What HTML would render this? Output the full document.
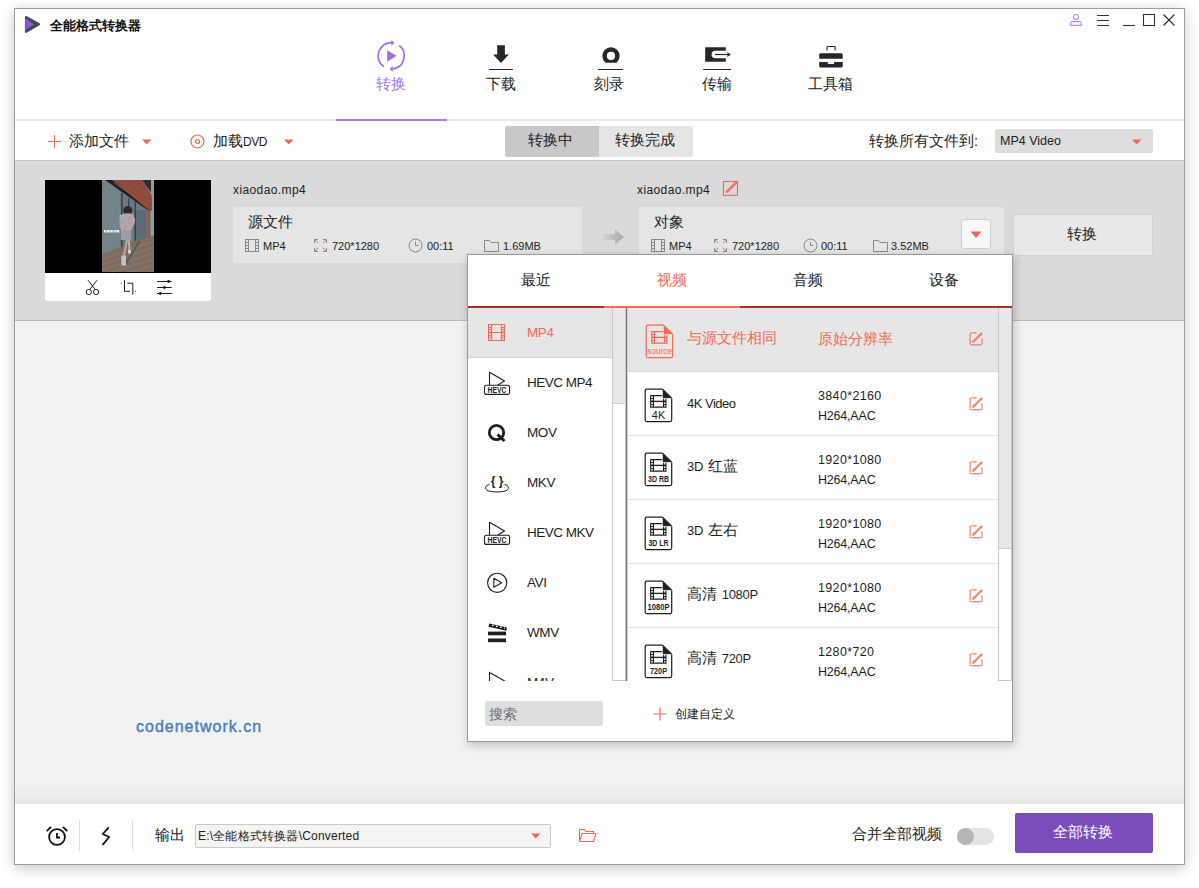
<!DOCTYPE html>
<html><head><meta charset="utf-8">
<style>
*{margin:0;padding:0;box-sizing:border-box;}
html,body{width:1199px;height:888px;overflow:hidden;background:#fff;font-family:"Liberation Sans",sans-serif;color:#222;}
.a{position:absolute;}
.t{position:absolute;white-space:nowrap;line-height:1;}
svg{position:absolute;overflow:visible;}
#win{position:absolute;left:14px;top:8px;width:1171px;height:857px;border:1px solid #9c9c9c;background:#fff;box-shadow:0 3px 13px rgba(0,0,0,0.22);overflow:hidden;}
</style></head><body>
<div id="win"></div>
<div class="a" id="root" style="left:0;top:0;width:1199px;height:888px;">

<!-- ===== TITLE BAR ===== -->
<svg style="left:24px;top:15px" width="17" height="19" viewBox="0 0 17 19">
  <path d="M2 2 L15 9.3 L2 16.8 Z" fill="#4a4a4a" stroke="#4a4a4a" stroke-width="2.2" stroke-linejoin="round"/>
  <path d="M1.2 3.2 L10 9.3 L1.2 15.2 Z" fill="#8b56d9"/>
</svg>
<div class="t" style="left:50px;top:19px;font-size:13px;font-weight:bold;color:#111;">全能格式转换器</div>

<!-- window controls -->
<svg style="left:1069px;top:13px" width="14" height="14" viewBox="0 0 14 14">
  <circle cx="6.9" cy="4" r="2.5" fill="none" stroke="#a46cf0" stroke-width="1"/>
  <path d="M1.5 12.3 V10.6 Q1.5 8.6 3.5 8.6 H10.4 Q12.4 8.6 12.4 10.6 V12.3 Z" fill="none" stroke="#a46cf0" stroke-width="1"/>
</svg>
<svg style="left:1097px;top:14px" width="13" height="13" viewBox="0 0 13 13">
  <path d="M0 1.5H12M0 6.5H12M0 11.5H12" stroke="#333" stroke-width="1.1"/>
</svg>
<svg style="left:1122px;top:14px" width="13" height="13" viewBox="0 0 13 13">
  <path d="M1 11.5H13" stroke="#333" stroke-width="1.1"/>
</svg>
<svg style="left:1143px;top:14px" width="13" height="13" viewBox="0 0 13 13">
  <rect x="0.5" y="0.5" width="11" height="11" fill="none" stroke="#333" stroke-width="1.1"/>
</svg>
<svg style="left:1163px;top:14px" width="13" height="13" viewBox="0 0 13 13">
  <path d="M0.5 0.5L11.5 11.5M11.5 0.5L0.5 11.5" stroke="#333" stroke-width="1.2"/>
</svg>

<!-- ===== NAV ===== -->
<svg style="left:376px;top:41px" width="30" height="32" viewBox="0 0 30 32">
  <path d="M15.8 1.7 A13.2 13.2 0 0 0 7.7 25.7" fill="none" stroke="#a06aee" stroke-width="1.7"/>
  <path d="M23.2 4.4 A13.2 13.2 0 0 1 16.4 27.9" fill="none" stroke="#a06aee" stroke-width="1.7"/>
  <path d="M15.3 -1.1 L18.3 1.8 L15.3 4.8 Z" fill="#a06aee"/>
  <path d="M16.7 25 L13.7 28 L16.7 31 Z" fill="#a06aee"/>
  <path d="M11.2 9.2 L20.5 14.8 L11.2 20.7 Z" fill="#a06aee"/>
</svg>
<div class="t" style="left:376px;top:77px;font-size:14.5px;color:#a873ee;">转换</div>

<svg style="left:488px;top:44px" width="26" height="28" viewBox="0 0 26 28">
  <path d="M9.2 1.2 H16.9 V10.4 H20.9 L13 19 L5 10.4 H9.2 Z" fill="#2a2627"/>
  <path d="M1 25.5 H24.9" stroke="#2a2627" stroke-width="1"/>
</svg>
<div class="t" style="left:486px;top:77px;font-size:14.5px;color:#222;">下载</div>

<svg style="left:597px;top:46px" width="28" height="26" viewBox="0 0 28 26">
  <path d="M8.57 16.7 A8.7 8.7 0 1 1 19.43 16.7 Z" fill="#2a2627"/>
  <circle cx="14" cy="9.9" r="4.1" fill="#fff"/>
  <path d="M1 23.5 H25.9" stroke="#2a2627" stroke-width="1"/>
</svg>
<div class="t" style="left:594px;top:77px;font-size:14.5px;color:#222;">刻录</div>

<svg style="left:702px;top:46px" width="30" height="26" viewBox="0 0 30 26">
  <path d="M3.2 1.2 H23.8 V4.7 H13.35 A3.75 3.75 0 0 0 13.35 12.2 H23.8 V15.8 H3.2 Z" fill="#2a2627"/>
  <path d="M13 8.5 H26" stroke="#2a2627" stroke-width="1.2"/>
  <path d="M25.3 6.2 L29 8.5 L25.3 10.9 Z" fill="#2a2627"/>
  <path d="M1.2 23.5 H29" stroke="#2a2627" stroke-width="1"/>
</svg>
<div class="t" style="left:702px;top:77px;font-size:14.5px;color:#222;">传输</div>

<svg style="left:818px;top:45px" width="26" height="24" viewBox="0 0 26 24">
  <path d="M9 5.5 V2.2 Q9 1.5 9.7 1.5 H16.4 Q17.1 1.5 17.1 2.2 V5.5" fill="none" stroke="#2a2627" stroke-width="1.1"/>
  <path d="M1.2 9.7 Q1.2 8.2 2.7 8.2 H23.2 Q24.7 8.2 24.7 9.7 V13.8 H1.2 Z" fill="#2a2627"/>
  <path d="M1.2 17 H9.8 V19.1 H16.1 V17 H24.7 V21.1 Q24.7 22.6 23.2 22.6 H2.7 Q1.2 22.6 1.2 21.1 Z" fill="#2a2627"/>
</svg>
<div class="t" style="left:808px;top:77px;font-size:14.5px;color:#222;">工具箱</div>

<div class="a" style="left:15px;top:119px;width:1169px;height:2px;background:#eee8f6;"></div>
<div class="a" style="left:336px;top:119px;width:111px;height:2px;background:#b07cf7;"></div>

<!-- ===== TOOLBAR ===== -->
<svg style="left:47px;top:134px" width="15" height="15" viewBox="0 0 15 15"><path d="M7.5 1V14M1 7.5H14" stroke="#f26a4f" stroke-width="1"/></svg>
<div class="t" style="left:69px;top:134px;font-size:14.5px;color:#222;">添加文件</div>
<svg style="left:142px;top:139px" width="10" height="6" viewBox="0 0 10 6"><path d="M0 0.5H9.5L4.75 5.5Z" fill="#f0694f"/></svg>

<svg style="left:190px;top:134px" width="16" height="16" viewBox="0 0 16 16">
  <circle cx="7.5" cy="7.5" r="6.5" fill="none" stroke="#f0694f" stroke-width="1.2"/>
  <circle cx="7.5" cy="7.5" r="2" fill="none" stroke="#f0694f" stroke-width="1.2"/>
</svg>
<div class="t" style="left:213px;top:134px;font-size:14.5px;color:#222;">加载<span style="font-size:12px;letter-spacing:-0.4px;">DVD</span></div>
<svg style="left:284px;top:139px" width="10" height="6" viewBox="0 0 10 6"><path d="M0 0.5H9.5L4.75 5.5Z" fill="#f0694f"/></svg>

<div class="a" style="left:505px;top:126px;width:188px;height:31px;background:#e5e5e5;border-radius:2px;"></div>
<div class="a" style="left:505px;top:126px;width:94px;height:31px;background:#c8c8c8;border-radius:2px 0 0 2px;"></div>
<div class="t" style="left:528px;top:133px;font-size:14.5px;color:#222;">转换中</div>
<div class="t" style="left:615px;top:133px;font-size:14.5px;color:#222;">转换完成</div>

<div class="t" style="left:869px;top:134px;font-size:14.5px;color:#222;">转换所有文件到:</div>
<div class="a" style="left:995px;top:129px;width:158px;height:24px;background:#dddddd;border-radius:2px;"></div>
<div class="t" style="left:1000px;top:135px;font-size:12.5px;color:#222;">MP4 Video</div>
<svg style="left:1132px;top:139px" width="10" height="6" viewBox="0 0 10 6"><path d="M0 0.5H9.5L4.75 5.5Z" fill="#f0694f"/></svg>

<!-- ===== FILE ITEM AREA ===== -->
<div class="a" style="left:15px;top:160px;width:1169px;height:161px;background:#dadada;border-top:1px solid #c6c6c6;border-bottom:1px solid #bababa;"></div>
<div class="a" style="left:15px;top:321px;width:1169px;height:483px;background:#f2f2f0;"></div>
<div class="a" style="left:15px;top:782px;width:1169px;height:22px;background:linear-gradient(#f2f2f0,#ebebe9 70%,#e8e7e5);"></div>


<!-- thumbnail -->
<div class="a" style="left:45px;top:180px;width:166px;height:121px;background:#fff;border-radius:0 0 2px 2px;"></div>
<div class="a" style="left:45px;top:180px;width:166px;height:93px;background:#000;"></div>
<svg style="left:102px;top:180px" width="52" height="92" viewBox="0 0 52 92">
  <rect x="0" y="0" width="52" height="92" fill="#6a7a80"/>
  <path d="M1 0V74M3 0V74M5 0V73M7 0V73M9 0V72M11 0V71M13 0V71M15 0V70M17 0V69" stroke="#7f9095" stroke-width="0.9"/>
  <polygon points="33,30 52,30 52,56 33,61" fill="#586c75"/>
  <polygon points="48.5,0 52,0 52,92 48.5,92" fill="#8e9ea6"/>
  <polygon points="40,0 49,0 49,12" fill="#2c2e30"/>
  <polygon points="3,0 10.4,0 44,26 49,31 44,29" fill="#1e2022"/>
  <polygon points="10.4,0 40.2,0 49.9,15.8 49.9,31 44,28" fill="#8d4b3b"/>
  <path d="M12 3L46 26M18 2L48 22M26 1L49 18" stroke="#9a5848" stroke-width="0.8"/>
  <rect x="19.2" y="13" width="1.3" height="58" fill="#2f3538"/>
  <rect x="26.2" y="18" width="1.1" height="45" fill="#34393c"/>
  <rect x="32.6" y="22" width="1.2" height="40" fill="#2f3538"/>
  <rect x="44.5" y="30" width="2.2" height="28" fill="#a35c48"/>
  <polygon points="0,74.5 33,61 52,55 52,92 0,92" fill="#7f6c61"/>
  <path d="M0 80L52 61M0 85L52 67M0 90L52 73M10 92L52 79M28 92L52 85" stroke="#8f7c70" stroke-width="0.9"/>
  <path d="M23.5 84 L37.5 61" stroke="#4e5560" stroke-width="1.6"/>
  <ellipse cx="25.8" cy="30.5" rx="4.5" ry="4.6" fill="#2f2a2a"/>
  <path d="M17.5 35 Q24 32 31 34 L33 40 Q31 47 29 51 L19 51 Q17 44 17.5 35Z" fill="#aea7a6"/>
  <circle cx="20" cy="43" r="0.9" fill="#d97c64"/><circle cx="27" cy="38" r="0.8" fill="#d97c64"/><circle cx="24" cy="47" r="0.8" fill="#d97c64"/>
  <path d="M30 37 Q34 40 31 45" stroke="#d3a090" stroke-width="1.6" fill="none"/>
  <rect x="18.8" y="50.5" width="10.5" height="9.5" fill="#9b9ea2"/>
  <path d="M25 60 L21.8 76" stroke="#bfa99f" stroke-width="2"/>
  <path d="M27 60 L27.5 71" stroke="#cfb4a8" stroke-width="1.8"/>
  <rect x="19.4" y="75.5" width="4.5" height="10" fill="#c3c7c9"/>
  <rect x="26" y="70" width="3" height="3.5" fill="#d0d3d5"/>
  <path d="M2 51.2H17.5" stroke="#f2f2f2" stroke-width="2.4" stroke-dasharray="2 0.7 3 0.6 2.5 0.8"/>
</svg>
<svg style="left:85px;top:279px" width="16" height="16" viewBox="0 0 16 16">
  <path d="M3 1.2 L10.3 10.6 M12 1.2 L4.7 10.6" stroke="#1e1e1e" stroke-width="1"/>
  <circle cx="3.8" cy="13" r="2.6" fill="#fff" stroke="#1e1e1e" stroke-width="1"/>
  <circle cx="11.1" cy="13" r="2.6" fill="#fff" stroke="#1e1e1e" stroke-width="1"/>
</svg>
<svg style="left:120px;top:279px" width="17" height="17" viewBox="0 0 17 17">
  <path d="M4.5 1.4V12.4H10M7.3 4.2H12.8V15.6" fill="none" stroke="#1e1e1e" stroke-width="1"/>
  <circle cx="1.3" cy="4.2" r="0.55" fill="#1e1e1e"/><circle cx="15.6" cy="12.2" r="0.55" fill="#1e1e1e"/>
</svg>
<svg style="left:156px;top:279px" width="18" height="17" viewBox="0 0 18 17">
  <path d="M1.1 2.5H15.8M1.1 8.5H15.8M1.1 14.5H15.8" stroke="#1e1e1e" stroke-width="1"/>
  <circle cx="12.6" cy="2.5" r="1.4" fill="#1e1e1e"/><circle cx="8.4" cy="8.5" r="1.4" fill="#1e1e1e"/><circle cx="4.3" cy="14.5" r="1.4" fill="#1e1e1e"/>
</svg>

<!-- source -->
<div class="t" style="left:233px;top:184px;font-size:12px;letter-spacing:0.4px;color:#222;">xiaodao.mp4</div>
<div class="a" style="left:233px;top:207px;width:349px;height:56px;background:#e5e5e5;border-radius:2px;"></div>
<div class="t" style="left:248px;top:215px;font-size:14.5px;color:#222;">源文件</div>
<div class="a" id="srcmeta" style="left:0;top:0;">
<svg style="left:245px;top:239px" width="14" height="13" viewBox="0 0 14 13"><rect x="0.5" y="0.5" width="13" height="12" fill="none" stroke="#8a8a8a"/><path d="M3.5 0.5V12.5M10.5 0.5V12.5M0.5 3.5H3.5M0.5 6.5H3.5M0.5 9.5H3.5M10.5 3.5H13.5M10.5 6.5H13.5M10.5 9.5H13.5" stroke="#8a8a8a"/></svg>
<div class="t" style="left:263px;top:241px;font-size:11px;color:#222;">MP4</div>
<svg style="left:314px;top:239px" width="13" height="13" viewBox="0 0 13 13"><path d="M0.5 4V0.5H4M9 0.5H12.5V4M12.5 9V12.5H9M4 12.5H0.5V9M1 1L4 4M12 1L9 4M12 12L9 9M1 12L4 9" fill="none" stroke="#8a8a8a"/></svg>
<div class="t" style="left:332px;top:241px;font-size:11px;color:#222;">720*1280</div>
<svg style="left:408px;top:238px" width="15" height="15" viewBox="0 0 15 15"><circle cx="7.5" cy="7.5" r="6.5" fill="none" stroke="#8a8a8a"/><path d="M7.5 3.5V7.5H10.5" fill="none" stroke="#8a8a8a"/></svg>
<div class="t" style="left:427px;top:241px;font-size:11px;color:#222;">00:11</div>
<svg style="left:484px;top:239px" width="15" height="13" viewBox="0 0 15 13"><path d="M0.5 1.5H5.5L7 3.5H14.5V12.5H0.5Z" fill="none" stroke="#8a8a8a"/></svg>
<div class="t" style="left:503px;top:241px;font-size:11px;color:#222;">1.69MB</div>
</div>

<!-- arrow -->
<svg style="left:598px;top:228px" width="28" height="18" viewBox="0 0 28 18">
  <defs><linearGradient id="ag" x1="0" x2="1"><stop offset="0" stop-color="#dadada"/><stop offset="1" stop-color="#a8a8a8"/></linearGradient></defs>
  <path d="M2 6H17V1.5L26 9L17 16.5V12H2Z" fill="url(#ag)"/>
</svg>

<!-- target -->
<div class="t" style="left:637px;top:184px;font-size:12px;letter-spacing:0.4px;color:#222;">xiaodao.mp4</div>
<svg style="left:722px;top:180px" width="17" height="17" viewBox="0 0 17 17">
  <rect x="1.5" y="1.5" width="14" height="13.8" fill="none" stroke="#f26a4f" stroke-width="1.1"/>
  <path d="M5.2 11.6 L14.6 2.2" stroke="#f26a4f" stroke-width="2.6" stroke-linecap="round"/>
  <path d="M5.8 11 L13.8 3" stroke="#fbd3c8" stroke-width="0.6" stroke-dasharray="0.8 0.9"/>
</svg>
<div class="a" style="left:639px;top:207px;width:365px;height:56px;background:#e5e5e5;border-radius:2px;"></div>
<div class="t" style="left:654px;top:215px;font-size:14.5px;color:#222;">对象</div>
<svg style="left:651px;top:239px" width="14" height="13" viewBox="0 0 14 13"><rect x="0.5" y="0.5" width="13" height="12" fill="none" stroke="#8a8a8a"/><path d="M3.5 0.5V12.5M10.5 0.5V12.5M0.5 3.5H3.5M0.5 6.5H3.5M0.5 9.5H3.5M10.5 3.5H13.5M10.5 6.5H13.5M10.5 9.5H13.5" stroke="#8a8a8a"/></svg>
<div class="t" style="left:669px;top:241px;font-size:11px;color:#222;">MP4</div>
<svg style="left:714px;top:239px" width="13" height="13" viewBox="0 0 13 13"><path d="M0.5 4V0.5H4M9 0.5H12.5V4M12.5 9V12.5H9M4 12.5H0.5V9M1 1L4 4M12 1L9 4M12 12L9 9M1 12L4 9" fill="none" stroke="#8a8a8a"/></svg>
<div class="t" style="left:732px;top:241px;font-size:11px;color:#222;">720*1280</div>
<svg style="left:803px;top:238px" width="15" height="15" viewBox="0 0 15 15"><circle cx="7.5" cy="7.5" r="6.5" fill="none" stroke="#8a8a8a"/><path d="M7.5 3.5V7.5H10.5" fill="none" stroke="#8a8a8a"/></svg>
<div class="t" style="left:821px;top:241px;font-size:11px;color:#222;">00:11</div>
<svg style="left:873px;top:239px" width="15" height="13" viewBox="0 0 15 13"><path d="M0.5 1.5H5.5L7 3.5H14.5V12.5H0.5Z" fill="none" stroke="#8a8a8a"/></svg>
<div class="t" style="left:891px;top:241px;font-size:11px;color:#222;">3.52MB</div>
<div class="a" style="left:961px;top:219px;width:30px;height:30px;background:#f7f7f7;border:1px solid #cfcfcf;border-radius:3px;"></div>
<svg style="left:970px;top:231px" width="12" height="8" viewBox="0 0 12 8"><path d="M0.5 0.5H11.5L6 7Z" fill="#f0694f"/></svg>
<div class="a" style="left:1013px;top:214px;width:140px;height:42px;background:#e8e8e8;border:1px solid #d2d2d2;border-radius:2px;"></div>
<div class="t" style="left:1067px;top:227px;font-size:14.5px;color:#222;">转换</div>

<!-- watermark -->
<div class="t" style="left:136px;top:719px;font-size:16px;color:#4a80c2;letter-spacing:1px;-webkit-text-stroke:0.45px #4a80c2;">codenetwork.cn</div>


<!-- ===== FORMAT PANEL ===== -->
<div class="a" style="left:467px;top:254px;width:546px;height:488px;background:#fff;border:1px solid #9a9a9a;box-shadow:1px 3px 9px rgba(0,0,0,0.22);"></div>
<div class="t" style="left:521px;top:273px;font-size:14.5px;color:#222;">最近</div>
<div class="t" style="left:657px;top:273px;font-size:14.5px;color:#f26a4f;">视频</div>
<div class="t" style="left:793px;top:273px;font-size:14.5px;color:#222;">音频</div>
<div class="t" style="left:929px;top:273px;font-size:14.5px;color:#222;">设备</div>
<div class="a" style="left:468px;top:306px;width:544px;height:2px;background:#a83220;"></div>
<div class="a" style="left:604px;top:306px;width:136px;height:2px;background:#f56a4c;"></div>

<!-- left list -->
<div class="a" style="left:468px;top:308px;width:159px;height:373px;overflow:hidden;">
  <div class="a" style="left:0;top:0;width:144px;height:50px;background:#e6e6e6;border-bottom:1px solid #d0d0d0;"></div>
  <div class="a" style="left:144px;top:0;width:14px;height:373px;background:#fff;border:1px solid #c8c8c8;border-top:none;"></div>
  <div class="a" style="left:144px;top:0;width:14px;height:96px;background:#e8e8e8;border:1px solid #c8c8c8;border-top:none;border-bottom-color:#cdcdcd;"></div>
  <div class="a" style="left:158px;top:0;width:1px;height:373px;background:#787878;"></div>
</div>
<svg style="left:487px;top:323px" width="19" height="19" viewBox="0 0 19 19"><path fill-rule="evenodd" d="M1 1H18V18H1Z M5.2 2.1H13.8V9H5.2Z M5.2 10H13.8V16.9H5.2Z M2.1 2.0H4.1V3.9H2.1Z M14.9 2.0H16.9V3.9H14.9Z M2.1 5.0H4.1V6.0H2.1Z M14.9 5.0H16.9V6.0H14.9Z M2.1 7.0H4.1V8.6H2.1Z M14.9 7.0H16.9V8.6H14.9Z M2.1 10.2H4.1V11.8H2.1Z M14.9 10.2H16.9V11.8H14.9Z M2.1 12.8H4.1V13.8H2.1Z M14.9 12.8H16.9V13.8H14.9Z M2.1 14.8H4.1V16.8H2.1Z M14.9 14.8H16.9V16.8H14.9Z " fill="#f26a4f"/></svg>
<div class="t" style="left:527px;top:326px;font-size:13.5px;letter-spacing:-0.4px;color:#f26a4f;">MP4</div>
<svg style="left:483px;top:370px" width="28" height="26" viewBox="0 0 28 26"><path d="M6.5 15.3V2.3L21.5 11L14.5 15.3" fill="none" stroke="#1e1e1e" stroke-width="1.1" stroke-linejoin="round"/><rect x="1.5" y="15.3" width="25.1" height="9.1" rx="2" fill="#fff" stroke="#1e1e1e" stroke-width="1.1"/><text x="14" y="22.9" font-family="Liberation Sans" font-size="8.5" font-weight="bold" text-anchor="middle" fill="#1e1e1e" textLength="19" lengthAdjust="spacingAndGlyphs">HEVC</text></svg>
<div class="t" style="left:527px;top:376px;font-size:13.5px;letter-spacing:-0.5px;color:#1e1e1e;">HEVC MP4</div>
<svg style="left:486px;top:423px" width="22" height="20" viewBox="0 0 22 20"><circle cx="10.5" cy="9.5" r="7.2" fill="none" stroke="#1e1e1e" stroke-width="2.8"/><path d="M11.5 11.5 L18.5 18" stroke="#1e1e1e" stroke-width="3"/></svg>
<div class="t" style="left:527px;top:426px;font-size:13.5px;letter-spacing:-0.4px;color:#1e1e1e;">MOV</div>
<svg style="left:484px;top:472px" width="26" height="22" viewBox="0 0 26 22"><text x="13" y="12.5" font-family="Liberation Sans" font-size="12" font-weight="bold" text-anchor="middle" fill="#1e1e1e">{ }</text><path d="M5.5 12.5 C1 13.5 0.5 16.5 3 18.3 C7 20.5 19 20.5 23 18.3 C25.5 16.5 25 13.5 20.5 12.5" fill="none" stroke="#1e1e1e" stroke-width="1"/></svg>
<div class="t" style="left:527px;top:476px;font-size:13.5px;letter-spacing:-0.4px;color:#1e1e1e;">MKV</div>
<svg style="left:483px;top:520px" width="28" height="26" viewBox="0 0 28 26"><path d="M6.5 15.3V2.3L21.5 11L14.5 15.3" fill="none" stroke="#1e1e1e" stroke-width="1.1" stroke-linejoin="round"/><rect x="1.5" y="15.3" width="25.1" height="9.1" rx="2" fill="#fff" stroke="#1e1e1e" stroke-width="1.1"/><text x="14" y="22.9" font-family="Liberation Sans" font-size="8.5" font-weight="bold" text-anchor="middle" fill="#1e1e1e" textLength="19" lengthAdjust="spacingAndGlyphs">HEVC</text></svg>
<div class="t" style="left:527px;top:526px;font-size:13.5px;letter-spacing:-0.5px;color:#1e1e1e;">HEVC MKV</div>
<svg style="left:486px;top:572px" width="22" height="22" viewBox="0 0 22 22"><circle cx="11.2" cy="10.8" r="9.6" fill="none" stroke="#1e1e1e" stroke-width="1.1"/><path d="M7.8 6.3L15.6 10.8L7.8 15.3Z" fill="none" stroke="#1e1e1e" stroke-width="1.1" stroke-linejoin="round"/></svg>
<div class="t" style="left:527px;top:576px;font-size:13.5px;letter-spacing:-0.4px;color:#1e1e1e;">AVI</div>
<svg style="left:486px;top:621px" width="22" height="22" viewBox="0 0 22 22"><path d="M3.2 2.5 L21 6.5 L20.3 9.8 L2.5 5.8Z" fill="#1e1e1e"/><path d="M6 4.3L7.6 4.7M10 5.2L11.6 5.6M14 6.1L15.6 6.5M18 7L19 7.3" stroke="#fff" stroke-width="1.3"/><rect x="2" y="10.6" width="18" height="10.6" fill="#1e1e1e"/><rect x="2" y="14.3" width="18" height="3.2" fill="#fff"/></svg>
<div class="t" style="left:527px;top:626px;font-size:13.5px;letter-spacing:-0.4px;color:#1e1e1e;">WMV</div>
<div class="a" style="left:468px;top:660px;width:144px;height:21px;overflow:hidden;">
<svg style="left:21px;top:12px" width="22" height="14" viewBox="0 0 22 14"><path d="M0.5 11V0.5L16.5 9.5" fill="none" stroke="#1e1e1e" stroke-width="1.1"/></svg>
<div class="t" style="left:59px;top:16px;font-size:13.5px;letter-spacing:-0.4px;color:#1e1e1e;">M4V</div>
</div>

<!-- right list -->
<div class="a" style="left:627px;top:308px;width:385px;height:373px;overflow:hidden;">
  <div class="a" style="left:0;top:0;width:1px;height:373px;background:#cfcfcf;"></div>
  <div class="a" style="left:1px;top:0;width:370px;height:63px;background:#e6e6e6;"></div>
  <div class="a" style="left:1px;top:63px;width:370px;height:1px;background:#d6d6d6;"></div>
  <div class="a" style="left:1px;top:127px;width:370px;height:1px;background:#e2e2e2;"></div>
  <div class="a" style="left:1px;top:191px;width:370px;height:1px;background:#e2e2e2;"></div>
  <div class="a" style="left:1px;top:255px;width:370px;height:1px;background:#e2e2e2;"></div>
  <div class="a" style="left:1px;top:319px;width:370px;height:1px;background:#e2e2e2;"></div>
  <div class="a" style="left:371px;top:0;width:14px;height:373px;background:#fff;border:1px solid #c8c8c8;border-top:none;"></div>
  <div class="a" style="left:371px;top:0;width:14px;height:241px;background:#e8e8e8;border:1px solid #c8c8c8;border-top:none;border-bottom-color:#cdcdcd;"></div>
</div>
<svg style="left:645px;top:324px" width="30" height="36" viewBox="0 0 30 36"><path d="M2.7 1.1H18.3L27.7 10.4V32.1Q27.7 33.6 26.2 33.6H2.7Q1.2 33.6 1.2 32.1V2.6Q1.2 1.1 2.7 1.1Z" fill="#e6e6e6" stroke="#f26a4f" stroke-width="1.2" stroke-linejoin="round"/><path fill-rule="evenodd" d="M6.1 7.1H22.5V19.7H6.1Z M10 8.2H19V12.8H10Z M10 13.9H19V18.6H10Z M7.2 8.2H8.9V9.9H7.2Z M20.1 8.2H21.4V9.9H20.1Z M7.2 10.9H8.9V12.6H7.2Z M20.1 10.9H21.4V12.6H20.1Z M7.2 14.2H8.9V15.9H7.2Z M20.1 14.2H21.4V15.9H20.1Z M7.2 16.9H8.9V18.6H7.2Z M20.1 16.9H21.4V18.6H20.1Z " fill="#f26a4f"/><path d="M18.3 1.1L27.7 10.4H18.3Z" fill="#f26a4f" stroke="#e6e6e6" stroke-width="0.8"/><path d="M18.3 1.1L27.7 10.4" stroke="#f26a4f" stroke-width="1.2"/><text x="14.5" y="30.4" font-family="Liberation Sans" font-size="8.5" font-weight="normal" text-anchor="middle" fill="#f26a4f" textLength="25" lengthAdjust="spacingAndGlyphs">source</text></svg>
<div class="t" style="left:687px;top:330px;font-size:15px;color:#f26a4f;">与源文件相同</div>
<div class="t" style="left:818px;top:331px;font-size:15px;color:#f26a4f;">原始分辨率</div>
<svg style="left:968px;top:331px" width="16" height="16" viewBox="0 0 16 16"><path d="M8.6 1.9H3.1Q2.1 1.9 2.1 2.9V12.8Q2.1 13.8 3.1 13.8H13Q14 13.8 14 12.8V7.4" fill="none" stroke="#f26a4f" stroke-width="1"/><path d="M5.2 10.8 L13.4 2.6" stroke="#f26a4f" stroke-width="2.3" stroke-linecap="round" opacity="0.85"/><path d="M5.6 10.4 L12 4" stroke="#fff" stroke-width="0.5" stroke-dasharray="0.7 1" opacity="0.9"/></svg>
<svg style="left:644px;top:388px" width="30" height="36" viewBox="0 0 30 36"><path d="M2.7 1.1H18.3L27.7 10.4V32.1Q27.7 33.6 26.2 33.6H2.7Q1.2 33.6 1.2 32.1V2.6Q1.2 1.1 2.7 1.1Z" fill="#fff" stroke="#1e1e1e" stroke-width="1.2" stroke-linejoin="round"/><path fill-rule="evenodd" d="M6.1 7.1H22.5V19.7H6.1Z M10 8.2H19V12.8H10Z M10 13.9H19V18.6H10Z M7.2 8.2H8.9V9.9H7.2Z M20.1 8.2H21.4V9.9H20.1Z M7.2 10.9H8.9V12.6H7.2Z M20.1 10.9H21.4V12.6H20.1Z M7.2 14.2H8.9V15.9H7.2Z M20.1 14.2H21.4V15.9H20.1Z M7.2 16.9H8.9V18.6H7.2Z M20.1 16.9H21.4V18.6H20.1Z " fill="#1e1e1e"/><path d="M18.3 1.1L27.7 10.4H18.3Z" fill="#1e1e1e" stroke="#fff" stroke-width="0.8"/><path d="M18.3 1.1L27.7 10.4" stroke="#1e1e1e" stroke-width="1.2"/><text x="14.5" y="30.9" font-family="Liberation Sans" font-size="11" font-weight="normal" text-anchor="middle" fill="#1e1e1e" >4K</text></svg><div class="t" style="left:687px;top:397px;font-size:13px;letter-spacing:-0.5px;color:#1e1e1e;">4K Video</div><div class="t" style="left:818px;top:390px;font-size:12.5px;letter-spacing:0.35px;color:#1e1e1e;">3840*2160</div><div class="t" style="left:818px;top:410px;font-size:12.5px;letter-spacing:-0.2px;color:#1e1e1e;">H264,AAC</div><svg style="left:968px;top:396px" width="16" height="16" viewBox="0 0 16 16"><path d="M8.6 1.9H3.1Q2.1 1.9 2.1 2.9V12.8Q2.1 13.8 3.1 13.8H13Q14 13.8 14 12.8V7.4" fill="none" stroke="#f26a4f" stroke-width="1"/><path d="M5.2 10.8 L13.4 2.6" stroke="#f26a4f" stroke-width="2.3" stroke-linecap="round" opacity="0.85"/><path d="M5.6 10.4 L12 4" stroke="#fff" stroke-width="0.5" stroke-dasharray="0.7 1" opacity="0.9"/></svg><svg style="left:644px;top:452px" width="30" height="36" viewBox="0 0 30 36"><path d="M2.7 1.1H18.3L27.7 10.4V32.1Q27.7 33.6 26.2 33.6H2.7Q1.2 33.6 1.2 32.1V2.6Q1.2 1.1 2.7 1.1Z" fill="#fff" stroke="#1e1e1e" stroke-width="1.2" stroke-linejoin="round"/><path fill-rule="evenodd" d="M6.1 7.1H22.5V19.7H6.1Z M10 8.2H19V12.8H10Z M10 13.9H19V18.6H10Z M7.2 8.2H8.9V9.9H7.2Z M20.1 8.2H21.4V9.9H20.1Z M7.2 10.9H8.9V12.6H7.2Z M20.1 10.9H21.4V12.6H20.1Z M7.2 14.2H8.9V15.9H7.2Z M20.1 14.2H21.4V15.9H20.1Z M7.2 16.9H8.9V18.6H7.2Z M20.1 16.9H21.4V18.6H20.1Z " fill="#1e1e1e"/><path d="M18.3 1.1L27.7 10.4H18.3Z" fill="#1e1e1e" stroke="#fff" stroke-width="0.8"/><path d="M18.3 1.1L27.7 10.4" stroke="#1e1e1e" stroke-width="1.2"/><text x="14.5" y="30.4" font-family="Liberation Sans" font-size="8.5" font-weight="bold" text-anchor="middle" fill="#1e1e1e" textLength="21" lengthAdjust="spacingAndGlyphs">3D RB</text></svg><div class="t" style="left:687px;top:459px;font-size:13px;letter-spacing:-0.3px;word-spacing:2px;color:#1e1e1e;">3D <span style="font-size:14.5px">红蓝</span></div><div class="t" style="left:818px;top:454px;font-size:12.5px;letter-spacing:0.35px;color:#1e1e1e;">1920*1080</div><div class="t" style="left:818px;top:474px;font-size:12.5px;letter-spacing:-0.2px;color:#1e1e1e;">H264,AAC</div><svg style="left:968px;top:460px" width="16" height="16" viewBox="0 0 16 16"><path d="M8.6 1.9H3.1Q2.1 1.9 2.1 2.9V12.8Q2.1 13.8 3.1 13.8H13Q14 13.8 14 12.8V7.4" fill="none" stroke="#f26a4f" stroke-width="1"/><path d="M5.2 10.8 L13.4 2.6" stroke="#f26a4f" stroke-width="2.3" stroke-linecap="round" opacity="0.85"/><path d="M5.6 10.4 L12 4" stroke="#fff" stroke-width="0.5" stroke-dasharray="0.7 1" opacity="0.9"/></svg><svg style="left:644px;top:516px" width="30" height="36" viewBox="0 0 30 36"><path d="M2.7 1.1H18.3L27.7 10.4V32.1Q27.7 33.6 26.2 33.6H2.7Q1.2 33.6 1.2 32.1V2.6Q1.2 1.1 2.7 1.1Z" fill="#fff" stroke="#1e1e1e" stroke-width="1.2" stroke-linejoin="round"/><path fill-rule="evenodd" d="M6.1 7.1H22.5V19.7H6.1Z M10 8.2H19V12.8H10Z M10 13.9H19V18.6H10Z M7.2 8.2H8.9V9.9H7.2Z M20.1 8.2H21.4V9.9H20.1Z M7.2 10.9H8.9V12.6H7.2Z M20.1 10.9H21.4V12.6H20.1Z M7.2 14.2H8.9V15.9H7.2Z M20.1 14.2H21.4V15.9H20.1Z M7.2 16.9H8.9V18.6H7.2Z M20.1 16.9H21.4V18.6H20.1Z " fill="#1e1e1e"/><path d="M18.3 1.1L27.7 10.4H18.3Z" fill="#1e1e1e" stroke="#fff" stroke-width="0.8"/><path d="M18.3 1.1L27.7 10.4" stroke="#1e1e1e" stroke-width="1.2"/><text x="14.5" y="30.4" font-family="Liberation Sans" font-size="8.5" font-weight="bold" text-anchor="middle" fill="#1e1e1e" textLength="20" lengthAdjust="spacingAndGlyphs">3D LR</text></svg><div class="t" style="left:687px;top:523px;font-size:13px;letter-spacing:-0.3px;word-spacing:2px;color:#1e1e1e;">3D <span style="font-size:14.5px">左右</span></div><div class="t" style="left:818px;top:518px;font-size:12.5px;letter-spacing:0.35px;color:#1e1e1e;">1920*1080</div><div class="t" style="left:818px;top:538px;font-size:12.5px;letter-spacing:-0.2px;color:#1e1e1e;">H264,AAC</div><svg style="left:968px;top:524px" width="16" height="16" viewBox="0 0 16 16"><path d="M8.6 1.9H3.1Q2.1 1.9 2.1 2.9V12.8Q2.1 13.8 3.1 13.8H13Q14 13.8 14 12.8V7.4" fill="none" stroke="#f26a4f" stroke-width="1"/><path d="M5.2 10.8 L13.4 2.6" stroke="#f26a4f" stroke-width="2.3" stroke-linecap="round" opacity="0.85"/><path d="M5.6 10.4 L12 4" stroke="#fff" stroke-width="0.5" stroke-dasharray="0.7 1" opacity="0.9"/></svg><svg style="left:644px;top:580px" width="30" height="36" viewBox="0 0 30 36"><path d="M2.7 1.1H18.3L27.7 10.4V32.1Q27.7 33.6 26.2 33.6H2.7Q1.2 33.6 1.2 32.1V2.6Q1.2 1.1 2.7 1.1Z" fill="#fff" stroke="#1e1e1e" stroke-width="1.2" stroke-linejoin="round"/><path fill-rule="evenodd" d="M6.1 7.1H22.5V19.7H6.1Z M10 8.2H19V12.8H10Z M10 13.9H19V18.6H10Z M7.2 8.2H8.9V9.9H7.2Z M20.1 8.2H21.4V9.9H20.1Z M7.2 10.9H8.9V12.6H7.2Z M20.1 10.9H21.4V12.6H20.1Z M7.2 14.2H8.9V15.9H7.2Z M20.1 14.2H21.4V15.9H20.1Z M7.2 16.9H8.9V18.6H7.2Z M20.1 16.9H21.4V18.6H20.1Z " fill="#1e1e1e"/><path d="M18.3 1.1L27.7 10.4H18.3Z" fill="#1e1e1e" stroke="#fff" stroke-width="0.8"/><path d="M18.3 1.1L27.7 10.4" stroke="#1e1e1e" stroke-width="1.2"/><text x="14.5" y="30.4" font-family="Liberation Sans" font-size="8.5" font-weight="bold" text-anchor="middle" fill="#1e1e1e" textLength="22" lengthAdjust="spacingAndGlyphs">1080P</text></svg><div class="t" style="left:687px;top:587px;font-size:13px;letter-spacing:-0.3px;word-spacing:2px;color:#1e1e1e;"><span style="font-size:14.5px">高清</span> 1080P</div><div class="t" style="left:818px;top:582px;font-size:12.5px;letter-spacing:0.35px;color:#1e1e1e;">1920*1080</div><div class="t" style="left:818px;top:602px;font-size:12.5px;letter-spacing:-0.2px;color:#1e1e1e;">H264,AAC</div><svg style="left:968px;top:588px" width="16" height="16" viewBox="0 0 16 16"><path d="M8.6 1.9H3.1Q2.1 1.9 2.1 2.9V12.8Q2.1 13.8 3.1 13.8H13Q14 13.8 14 12.8V7.4" fill="none" stroke="#f26a4f" stroke-width="1"/><path d="M5.2 10.8 L13.4 2.6" stroke="#f26a4f" stroke-width="2.3" stroke-linecap="round" opacity="0.85"/><path d="M5.6 10.4 L12 4" stroke="#fff" stroke-width="0.5" stroke-dasharray="0.7 1" opacity="0.9"/></svg><svg style="left:644px;top:644px" width="30" height="36" viewBox="0 0 30 36"><path d="M2.7 1.1H18.3L27.7 10.4V32.1Q27.7 33.6 26.2 33.6H2.7Q1.2 33.6 1.2 32.1V2.6Q1.2 1.1 2.7 1.1Z" fill="#fff" stroke="#1e1e1e" stroke-width="1.2" stroke-linejoin="round"/><path fill-rule="evenodd" d="M6.1 7.1H22.5V19.7H6.1Z M10 8.2H19V12.8H10Z M10 13.9H19V18.6H10Z M7.2 8.2H8.9V9.9H7.2Z M20.1 8.2H21.4V9.9H20.1Z M7.2 10.9H8.9V12.6H7.2Z M20.1 10.9H21.4V12.6H20.1Z M7.2 14.2H8.9V15.9H7.2Z M20.1 14.2H21.4V15.9H20.1Z M7.2 16.9H8.9V18.6H7.2Z M20.1 16.9H21.4V18.6H20.1Z " fill="#1e1e1e"/><path d="M18.3 1.1L27.7 10.4H18.3Z" fill="#1e1e1e" stroke="#fff" stroke-width="0.8"/><path d="M18.3 1.1L27.7 10.4" stroke="#1e1e1e" stroke-width="1.2"/><text x="14.5" y="30.4" font-family="Liberation Sans" font-size="8.5" font-weight="bold" text-anchor="middle" fill="#1e1e1e" textLength="17" lengthAdjust="spacingAndGlyphs">720P</text></svg><div class="t" style="left:687px;top:651px;font-size:13px;letter-spacing:-0.3px;word-spacing:2px;color:#1e1e1e;"><span style="font-size:14.5px">高清</span> 720P</div><div class="t" style="left:818px;top:646px;font-size:12.5px;letter-spacing:0.35px;color:#1e1e1e;">1280*720</div><div class="t" style="left:818px;top:666px;font-size:12.5px;letter-spacing:-0.2px;color:#1e1e1e;">H264,AAC</div><svg style="left:968px;top:652px" width="16" height="16" viewBox="0 0 16 16"><path d="M8.6 1.9H3.1Q2.1 1.9 2.1 2.9V12.8Q2.1 13.8 3.1 13.8H13Q14 13.8 14 12.8V7.4" fill="none" stroke="#f26a4f" stroke-width="1"/><path d="M5.2 10.8 L13.4 2.6" stroke="#f26a4f" stroke-width="2.3" stroke-linecap="round" opacity="0.85"/><path d="M5.6 10.4 L12 4" stroke="#fff" stroke-width="0.5" stroke-dasharray="0.7 1" opacity="0.9"/></svg>
<!-- panel bottom -->
<div class="a" style="left:485px;top:701px;width:118px;height:25px;background:#dedede;border-radius:2px;"></div>
<div class="t" style="left:489px;top:707px;font-size:14px;color:#6e6e6e;">搜索</div>
<svg style="left:653px;top:707px" width="14" height="14" viewBox="0 0 14 14"><path d="M7 0.5V13.5M0.5 7H13.5" stroke="#f26a4f" stroke-width="1.2"/></svg>
<div class="t" style="left:675px;top:708px;font-size:12px;color:#1e1e1e;">创建自定义</div>
<!-- ===== BOTTOM BAR ===== -->
<svg style="left:45px;top:825px" width="24" height="23" viewBox="0 0 24 23">
  <circle cx="12" cy="12" r="7.9" fill="none" stroke="#111" stroke-width="1.8"/>
  <path d="M12 8V12.5H15" fill="none" stroke="#111" stroke-width="1.8"/>
  <path d="M2.2 5.6 L5.6 2.4 M21.8 5.6 L18.4 2.4" stroke="#111" stroke-width="1.9" stroke-linecap="round"/>
</svg>
<div class="a" style="left:79px;top:820px;width:1px;height:31px;background:#dcdcdc;"></div>
<svg style="left:100px;top:827px" width="12" height="19" viewBox="0 0 12 19">
  <path d="M8.3 0.9 L2.7 7 L9.3 10 L3 17.3" fill="none" stroke="#111" stroke-width="1.8" stroke-linecap="round" stroke-linejoin="round"/>
</svg>
<div class="a" style="left:132px;top:820px;width:1px;height:31px;background:#dcdcdc;"></div>
<div class="t" style="left:155px;top:828px;font-size:14.5px;color:#222;">输出</div>
<div class="a" style="left:195px;top:824px;width:356px;height:24px;background:#f4f4f4;border:1px solid #c9c9c9;border-radius:2px;"></div>
<div class="t" style="left:198px;top:830px;font-size:12px;letter-spacing:0.2px;color:#222;">E:\全能格式转换器\Converted</div>
<svg style="left:531px;top:833px" width="10" height="6" viewBox="0 0 10 6"><path d="M0 0.5H9.5L4.75 5.5Z" fill="#f0694f"/></svg>
<svg style="left:578px;top:828px" width="19" height="15" viewBox="0 0 19 15">
  <path d="M1.5 13.5V1.5H6.5L8 3.5H15.5V5.5" fill="none" stroke="#f0694f" stroke-width="1.1"/>
  <path d="M1.5 13.5L4 5.5H18L15.5 13.5Z" fill="none" stroke="#f0694f" stroke-width="1.1" stroke-linejoin="round"/>
</svg>
<div class="t" style="left:852px;top:827px;font-size:14.5px;color:#222;">合并全部视频</div>
<div class="a" style="left:957px;top:828px;width:37px;height:17px;background:#e3e3e3;border-radius:9px;"></div>
<div class="a" style="left:957px;top:828px;width:17px;height:17px;background:#b5b5b5;border-radius:50%;"></div>
<div class="a" style="left:1015px;top:813px;width:138px;height:40px;background:#7a4dbd;border-radius:2px;"></div>
<div class="t" style="left:1053px;top:825px;font-size:14.5px;color:#fff;">全部转换</div>
</div>
</body></html>
